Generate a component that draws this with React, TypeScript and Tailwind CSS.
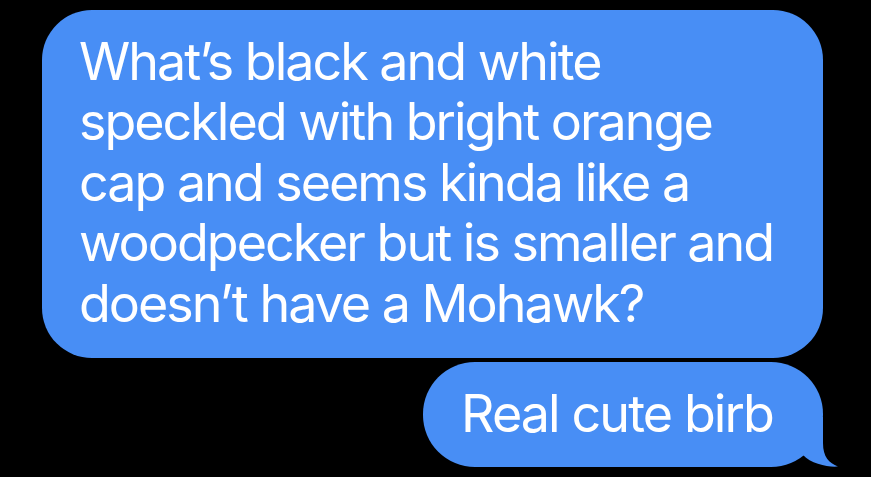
export default function App() {
  const lines = [
    "What’s black and white",
    "speckled with bright orange",
    "cap and seems kinda like a",
    "woodpecker but is smaller and",
    "doesn’t have a Mohawk?",
  ];

  return (
    <div className="min-h-screen w-full bg-black pt-[10px] pr-[48px] flex flex-col items-end gap-1 font-['Inter','Liberation_Sans',sans-serif] text-white">
      {/* incoming long message */}
      <div className="w-[781px] rounded-[50px] bg-[#488ef5] pl-[37px] pr-6 pt-[22px] pb-[24px] text-[52px] leading-[60.4px] tracking-[-2px]">
        {lines.map((l) => (
          <span key={l} className="block whitespace-nowrap">
            {l}
          </span>
        ))}
      </div>

      {/* reply with tail */}
      <div className="relative">
        <div className="rounded-[52px] bg-[#488ef5] pl-[38px] pr-[50px] pt-[22px] pb-[23px] text-[52px] leading-[60.4px] tracking-[-1.9px] whitespace-nowrap">
          Real cute birb
        </div>
        <svg
          className="absolute -right-4 bottom-0"
          width="40"
          height="50"
          viewBox="0 0 40 50"
        >
          <path
            d="M0 0 L24 0 L24 26 C24 40 30 46 39 49.5 C30 50.5 12 47 4 38 L0 30 Z"
            fill="#488ef5"
          />
        </svg>
      </div>
    </div>
  );
}
